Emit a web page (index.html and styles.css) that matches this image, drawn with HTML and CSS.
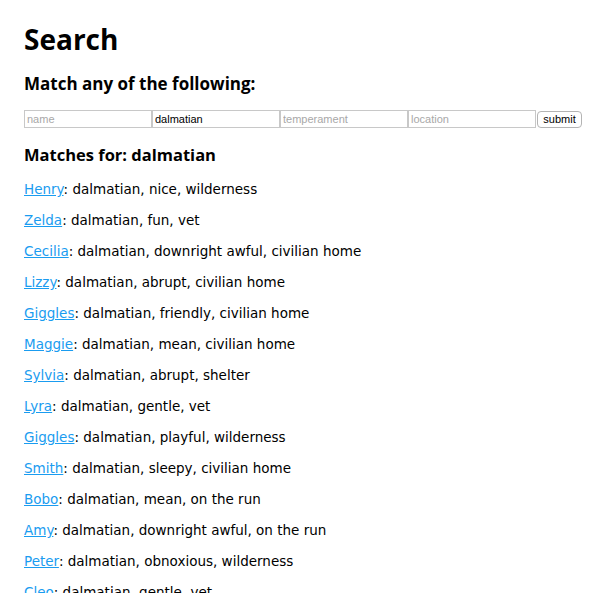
FILE: index.html
```html
<!DOCTYPE html>
<html>
<head>
<meta charset="utf-8">
<link rel="stylesheet" href="styles.css">
</head>
<body>
<h1 class="title">Search</h1>
<h3 class="subtitle">Match any of the following:</h3>
<form class="search-form">
  <input class="field" type="text" placeholder="name">
  <input class="field" type="text" value="dalmatian" placeholder="breed">
  <input class="field" type="text" placeholder="temperament">
  <input class="field" type="text" placeholder="location">
  <button class="submit" type="button">submit</button>
</form>
<h3 class="subtitle matches">Matches for: dalmatian</h3>
<div class="results">
  <p class="result"><a href="#">Henry</a>: dalmatian, nice, wilderness</p>
  <p class="result"><a href="#">Zelda</a>: dalmatian, fun, vet</p>
  <p class="result"><a href="#">Cecilia</a>: dalmatian, downright awful, civilian home</p>
  <p class="result"><a href="#">Lizzy</a>: dalmatian, abrupt, civilian home</p>
  <p class="result"><a href="#">Giggles</a>: dalmatian, friendly, civilian home</p>
  <p class="result"><a href="#">Maggie</a>: dalmatian, mean, civilian home</p>
  <p class="result"><a href="#">Sylvia</a>: dalmatian, abrupt, shelter</p>
  <p class="result"><a href="#">Lyra</a>: dalmatian, gentle, vet</p>
  <p class="result"><a href="#">Giggles</a>: dalmatian, playful, wilderness</p>
  <p class="result"><a href="#">Smith</a>: dalmatian, sleepy, civilian home</p>
  <p class="result"><a href="#">Bobo</a>: dalmatian, mean, on the run</p>
  <p class="result"><a href="#">Amy</a>: dalmatian, downright awful, on the run</p>
  <p class="result"><a href="#">Peter</a>: dalmatian, obnoxious, wilderness</p>
  <p class="result"><a href="#">Cleo</a>: dalmatian, gentle, vet</p>
</div>
</body>
</html>
```
FILE: styles.css
```css
html, body {
  margin: 0;
  background: #fff;
}
body {
  padding: 0 24px;
  font-family: "DejaVu Sans", Verdana, sans-serif;
  font-size: 13.5px;
  color: #000;
}
.title {
  font-family: "Open Sans", "DejaVu Sans", sans-serif;
  font-size: 28px;
  font-weight: bold;
  margin: 19px 0 0;
  line-height: 40px;
}
.subtitle {
  font-family: "Open Sans", "DejaVu Sans", sans-serif;
  font-size: 17px;
  font-weight: bold;
  margin: 14px 0 0;
  line-height: 22px;
}
.search-form {
  display: flex;
  align-items: center;
  margin-top: 15px;
}
.field {
  box-sizing: border-box;
  width: 128px;
  height: 18px;
  margin: 0;
  padding: 0 2px;
  border: 1px solid #c8c8c8;
  font-family: "Liberation Sans", Arial, sans-serif;
  font-size: 11px;
  color: #000;
  outline: none;
}
.field::placeholder {
  color: #a8a8a8;
}
.submit {
  box-sizing: border-box;
  margin-left: 1px;
  height: 17px;
  width: 49px;
  padding: 0;
  border: 1px solid #b4b4b4;
  border-radius: 4px;
  background: #fff;
  font-family: "Liberation Sans", Arial, sans-serif;
  font-size: 11px;
  color: #000;
}
.matches {
  font-size: 16.5px;
  margin-top: 16px;
}
.results {
  margin-top: 15px;
}
.result {
  margin: 0 0 14px;
  line-height: 17px;
}
.result a {
  color: #1a9cf0;
  text-decoration: underline;
}
```
